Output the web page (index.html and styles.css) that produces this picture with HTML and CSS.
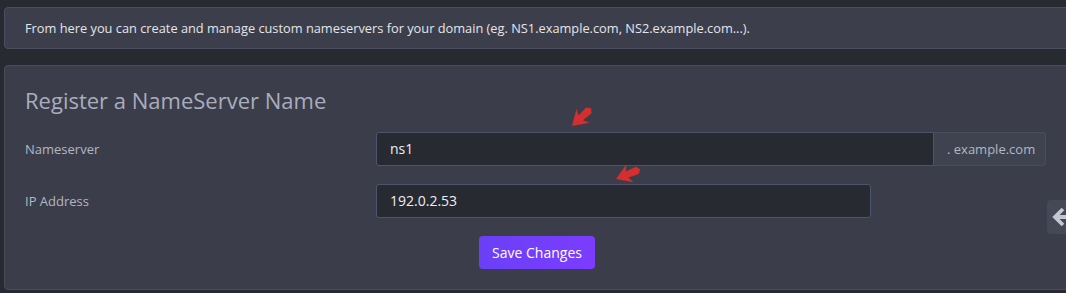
FILE: index.html
```html
<!DOCTYPE html>
<html>
<head>
<meta charset="utf-8">
<link rel="stylesheet" href="styles.css">
</head>
<body>
<div class="page">
  <div class="alert">From here you can create and manage custom nameservers for your domain (eg. NS1.example.com, NS2.example.com...).</div>
  <div class="panel">
    <h3 class="title">Register a NameServer Name</h3>
    <form class="form">
      <div class="row">
        <label class="label">Nameserver</label>
        <div class="group">
          <div class="input">ns1</div>
          <div class="addon">. example.com</div>
        </div>
      </div>
      <div class="row">
        <label class="label">IP Address</label>
        <div class="input input-short">192.0.2.53</div>
      </div>
      <div class="actions">
        <button type="button" class="btn">Save Changes</button>
      </div>
    </form>
  </div>
</div>
<svg class="mark mark-1" width="30" height="30" viewBox="0 0 30 30"><g transform="translate(2,27) rotate(-43)"><polygon points="0,0 15,-9.5 12,-3.2 23,-4 26,0 23,4 12,3.2 15,9.5" fill="#d42e2e"/></g></svg>
<svg class="mark mark-2" width="32" height="24" viewBox="0 0 32 24"><g transform="translate(2,20) rotate(-22)"><polygon points="0,0 15,-9.5 12,-3.2 23,-4 26,0 23,4 12,3.2 15,9.5" fill="#d42e2e"/></g></svg>
<div class="toggle"><svg width="22" height="22" viewBox="0 0 22 22"><path d="M12 3 L4 11 L12 19 M5 11 H22" fill="none" stroke="#c3c6d3" stroke-width="3.8"/></svg></div>
</body>
</html>
```
FILE: styles.css
```css
html, body {
  margin: 0;
  padding: 0;
  background: #282a32;
  overflow: hidden;
  font-family: "Open Sans", "Noto Sans", sans-serif;
}
.page {
  padding: 7px 0 0 4px;
  width: 1066px;
}
.alert {
  background: #3c3f4b;
  border: 1px solid #4a4e5e;
  border-radius: 4px;
  padding: 0 20px;
  line-height: 40px;
  font-size: 12.8px;
  color: #e4e5ea;
}
.panel {
  margin-top: 16px;
  background: #3b3e4a;
  border: 1px solid #4a4e5c;
  border-radius: 4px;
  padding: 19px 20px 20px 20px;
}
.title {
  margin: 0 0 17px;
  font-size: 22px;
  font-weight: 400;
  color: #a9adbd;
  line-height: normal;
}
.form {
  display: flex;
  flex-direction: column;
  gap: 18px;
}
.row {
  display: grid;
  grid-template-columns: 351px 670px;
  align-items: center;
}
.label {
  font-size: 13px;
  color: #b3b6c3;
}
.group {
  display: flex;
}
.input {
  box-sizing: border-box;
  height: 34px;
  line-height: 32px;
  padding: 0 13px;
  background: #282a31;
  border: 1px solid #4d546d;
  border-radius: 3px;
  color: #eceef2;
  font-size: 14px;
}
.group .input {
  flex: 1;
  border-radius: 3px 0 0 3px;
}
.input-short {
  width: 495px;
}
.addon {
  box-sizing: border-box;
  flex: 0 0 112px;
  white-space: nowrap;
  height: 34px;
  line-height: 32px;
  padding: 0 0 0 13px;
  background: #3f4350;
  border: 1px solid #4a4e5c;
  border-left: none;
  border-radius: 0 4px 4px 0;
  color: #b3b6c3;
  font-size: 13px;
}
.actions {
  text-align: center;
}
.btn {
  font-family: inherit;
  font-size: 14px;
  color: #fff;
  border: none;
  border-radius: 4px;
  height: 33px;
  width: 116px;
  padding: 0;
  background: linear-gradient(90deg, #6a40f7, #7c3cff);
}
.mark {
  position: absolute;
}
.mark-1 {
  left: 570px;
  top: 99px;
}
.mark-2 {
  left: 614px;
  top: 159px;
}
.toggle {
  position: absolute;
  left: 1047px;
  top: 200px;
  width: 30px;
  height: 34px;
  background: #454957;
  border-radius: 4px 0 0 4px;
  display: flex;
  align-items: center;
  padding-left: 4px;
  box-sizing: border-box;
}
.toggle svg {
  display: block;
}
```
